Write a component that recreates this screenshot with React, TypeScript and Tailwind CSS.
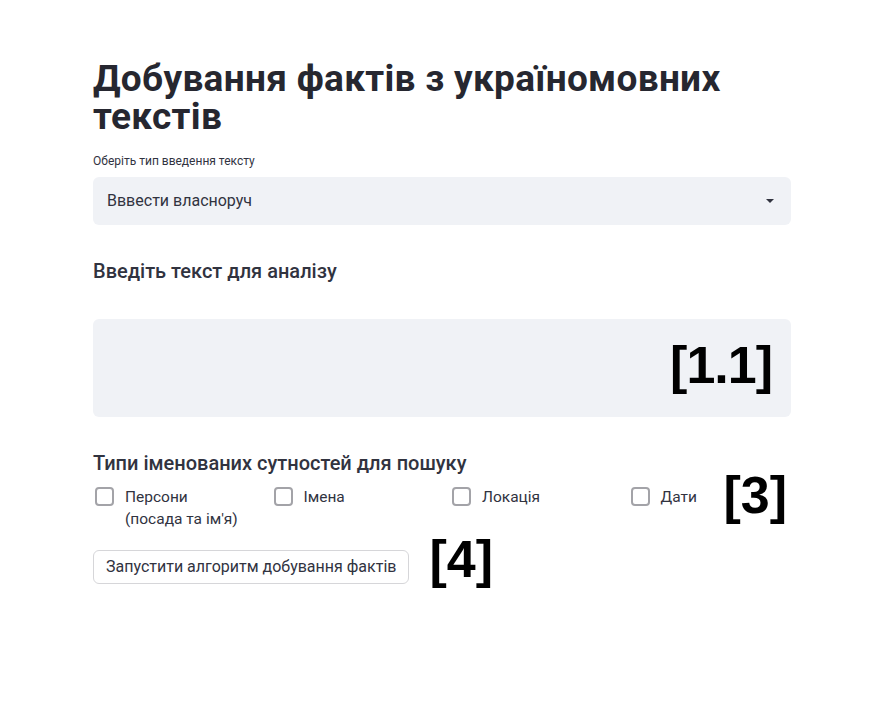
const entityTypes = [
    { label: "Персони", sub: "(посада та ім'я)" },
    { label: "Імена" },
    { label: "Локація" },
    { label: "Дати" },
];

function Checkbox({ label, sub }: { label: string; sub?: string }) {
    return (
        <label className="flex items-start gap-[11px] pl-[2px] cursor-pointer">
            <span className="mt-[1px] w-[19px] h-[19px] shrink-0 rounded-[4px] border-2 border-[#a3a3a8] bg-white" />
            <span className="text-[15.5px] leading-[22px] text-[#31333f]">
                {label}
                {sub && <span className="block">{sub}</span>}
            </span>
        </label>
    );
}

export default function App() {
    return (
        <div className="min-h-[719px] bg-white" style={{ fontFamily: "Roboto, 'Noto Sans', sans-serif" }}>
            <main className="ml-[93px] w-[698px] pt-[60px]">
                <h1 className="text-[37px] leading-[38px] font-bold text-[#262730] tracking-[0.3px]">
                    Добування фактів з україномовних текстів
                </h1>

                {/* Input type select */}
                <div className="mt-[17px]">
                    <div className="text-[12px] leading-[16px] text-[#31333f]">Оберіть тип введення тексту</div>
                    <div className="mt-[8px] h-[48px] rounded-[6px] bg-[#f0f2f6] flex items-center justify-between pl-[14px] pr-[17px]">
                        <span className="text-[16px] text-[#31333f]">Вввести власноруч</span>
                        <svg width="8" height="4" viewBox="0 0 8 4" className="text-[#31333f]">
                            <path d="M0 0h8L4 4z" fill="currentColor" />
                        </svg>
                    </div>
                </div>

                {/* Text area */}
                <h3 className="mt-[33px] text-[20px] leading-[26px] font-medium text-[#31333f]">Введіть текст для аналізу</h3>
                <div className="relative mt-[35px] h-[98px] rounded-[6px] bg-[#f0f2f6]">
                    <span
                        className="absolute right-[19px] top-[16px] text-[52px] leading-[60px] font-bold text-black tracking-[-1px]"
                        style={{ fontFamily: "'Liberation Sans', Arial, sans-serif" }}
                    >
                        [1.1]
                    </span>
                </div>

                {/* Entity types */}
                <h3 className="mt-[33px] text-[20px] leading-[26px] font-medium text-[#31333f]">Типи іменованих сутностей для пошуку</h3>
                <div className="relative mt-[10px] grid grid-cols-4 gap-4">
                    {entityTypes.map((e) => (
                        <Checkbox key={e.label} label={e.label} sub={e.sub} />
                    ))}
                    <span
                        className="absolute right-[4px] top-[-21px] text-[52px] leading-[60px] font-bold text-black"
                        style={{ fontFamily: "'Liberation Sans', Arial, sans-serif" }}
                    >
                        [3]
                    </span>
                </div>

                <div className="mt-[20px] flex items-start">
                    <button className="h-[34px] px-[12px] rounded-[6px] border border-[#d6d6d9] bg-white text-[16px] text-[#31333f]">
                        Запустити алгоритм добування фактів
                    </button>
                    <span
                        className="ml-[20px] -mt-[16px] text-[52px] leading-[50px] font-bold text-black"
                        style={{ fontFamily: "'Liberation Sans', Arial, sans-serif" }}
                    >
                        [4]
                    </span>
                </div>
            </main>
        </div>
    );
}
